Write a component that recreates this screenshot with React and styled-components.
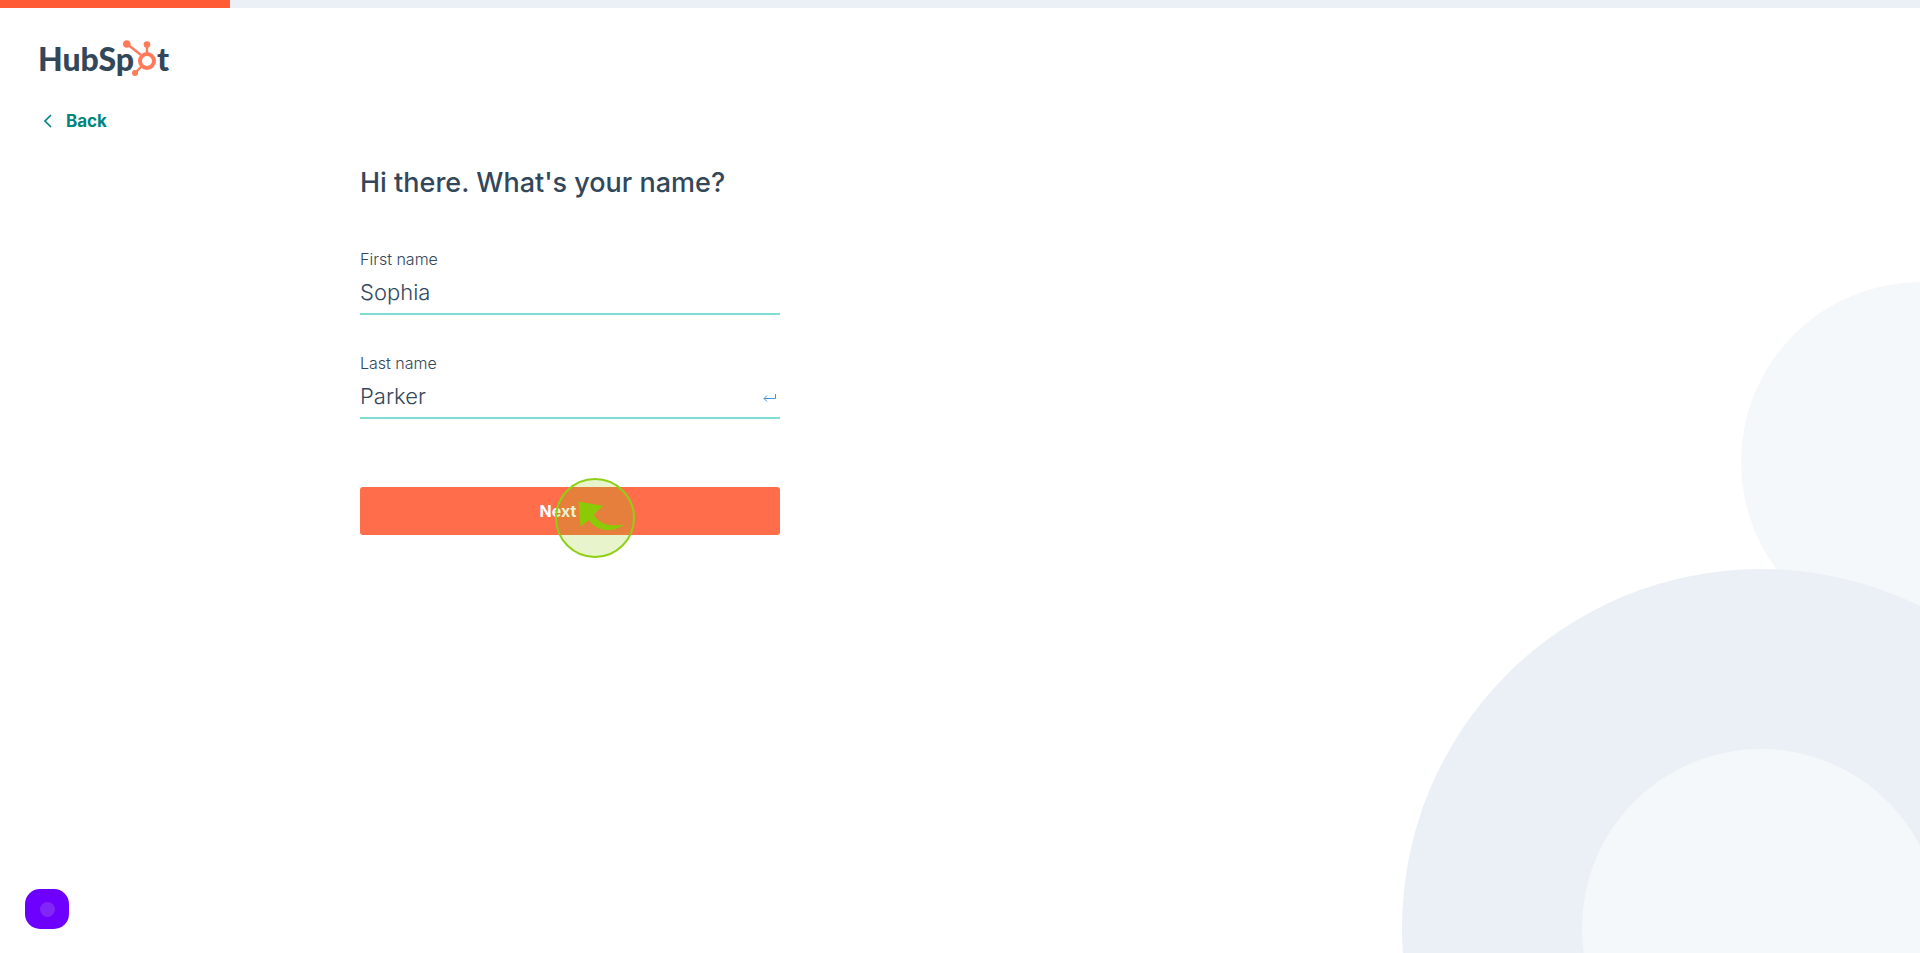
import React, { useState } from "react";
import styled, { createGlobalStyle } from "styled-components";

const GlobalStyle = createGlobalStyle`
  * {
    box-sizing: border-box;
  }

  body {
    margin: 0;
    background-color: #ffffff;
    color: #33475b;
    font-family: Inter, "Noto Sans", sans-serif;
  }
`;

const Page = styled.div`
  position: relative;
  display: flex;
  flex-direction: column;
  min-height: 100vh;
  overflow: hidden;
`;

const ProgressTrack = styled.div`
  height: 8px;
  background-color: #eaf0f6;
`;

const ProgressFill = styled.div`
  height: 100%;
  background-color: #ff5c35;
`;

const Header = styled.header`
  display: flex;
  flex-direction: column;
  align-items: flex-start;
  gap: 31px;
  padding: 32px 38px 0;
`;

const Logo = styled.a`
  display: flex;
  height: 38px;
  color: #33475b;
  font-family: Lato, sans-serif;
  font-size: 32px;
  font-weight: 900;
  line-height: 38px;
  text-decoration: none;
`;

const Sprocket = styled.svg`
  width: 34px;
  height: 38px;
  margin-left: -11px;
`;

const BackLink = styled.a`
  display: flex;
  align-items: center;
  gap: 14px;
  padding-left: 6px;
  color: #00857d;
  font-size: 17px;
  font-weight: 700;
  line-height: 24px;
  text-decoration: none;
`;

const Form = styled.form`
  display: flex;
  flex-direction: column;
  width: 420px;
  margin: 34px 0 0 18.75%;
`;

const Title = styled.h1`
  margin: 0 0 48px;
  font-size: 27px;
  font-weight: 500;
  line-height: 32px;
  white-space: nowrap;
`;

const Field = styled.div`
  display: flex;
  flex-direction: column;
  margin-bottom: 36px;

  label {
    font-size: 16px;
    font-weight: 300;
    line-height: 24px;
  }
`;

const InputRow = styled.div`
  display: flex;
  align-items: center;
  height: 44px;
  padding-right: 4px;
  border-bottom: 2px solid #7fded2;

  input {
    flex: 1;
    min-width: 0;
    padding: 0;
    border: none;
    outline: none;
    background: transparent;
    color: #33475b;
    font-family: inherit;
    font-size: 22px;
    font-weight: 300;
  }
`;

const NextButton = styled.button`
  position: relative;
  display: flex;
  align-items: center;
  justify-content: center;
  gap: 16px;
  height: 48px;
  margin-top: 32px;
  border: none;
  border-radius: 3px;
  background-color: #ff6d4b;
  color: #ffffff;
  font-family: inherit;
  font-size: 16px;
  font-weight: 700;
  cursor: pointer;
`;

const ClickMarker = styled.svg`
  position: absolute;
  top: -9px;
  left: 195px;
  width: 80px;
  height: 80px;
  pointer-events: none;
`;

const Bubbles = styled.svg`
  position: absolute;
  right: 0;
  bottom: 0;
  z-index: -1;
  width: 518px;
  height: 672px;
`;

const ChatButton = styled.button`
  position: absolute;
  bottom: 24px;
  left: 25px;
  display: flex;
  align-items: center;
  justify-content: center;
  width: 44px;
  height: 40px;
  padding: 0;
  border: none;
  border-radius: 15px;
  background-color: #6e00ff;
  cursor: pointer;

  span {
    width: 15px;
    height: 15px;
    border-radius: 50%;
    background-color: #8126f5;
  }
`;

function App() {
  const [firstName, setFirstName] = useState("Sophia");
  const [lastName, setLastName] = useState("Parker");
  const progress = 12;

  return (
    <>
      <GlobalStyle />
      <Page>
        <Bubbles viewBox="0 0 518 672" aria-hidden="true">
          <circle cx="519" cy="181" r="180" fill="#f5f8fa" />
          <circle cx="359" cy="647" r="359" fill="#eaf0f6" />
          <circle cx="359" cy="647" r="179" fill="#f5f8fa" />
        </Bubbles>

        <ProgressTrack>
          <ProgressFill style={{ width: `${progress}%` }} />
        </ProgressTrack>

        <Header>
          <Logo href="#" aria-label="HubSpot">
            <span>HubSp</span>
            <Sprocket viewBox="0 0 34 38" fill="none" stroke="#ff7a59">
              <circle cx="24" cy="21" r="7" strokeWidth="4" />
              <path d="M4 4l14 11M24 5v9M18 27l-6 6" strokeWidth="2.4" />
              <circle cx="3.8" cy="4" r="3.8" fill="#ff7a59" stroke="none" />
              <circle cx="24" cy="4.6" r="3.3" fill="#ff7a59" stroke="none" />
              <circle cx="12" cy="33" r="3" fill="#ff7a59" stroke="none" />
            </Sprocket>
            <span>t</span>
          </Logo>
          <BackLink href="#">
            <svg width="8" height="14" viewBox="0 0 8 14" fill="none" stroke="#00857d" strokeWidth="1.6">
              <path d="M7 1L1 7l6 6" />
            </svg>
            Back
          </BackLink>
        </Header>

        <Form onSubmit={(e) => e.preventDefault()}>
          <Title>Hi there. What's your name?</Title>

          <Field>
            <label htmlFor="firstName">First name</label>
            <InputRow>
              <input
                id="firstName"
                type="text"
                value={firstName}
                onChange={(e) => setFirstName(e.target.value)}
              />
            </InputRow>
          </Field>

          <Field>
            <label htmlFor="lastName">Last name</label>
            <InputRow>
              <input
                id="lastName"
                type="text"
                value={lastName}
                onChange={(e) => setLastName(e.target.value)}
              />
              <svg width="13" height="12" viewBox="0 0 13 12" fill="none" stroke="#4a90e2">
                <path d="M12.5 4v4.5H1M4 5.5l-3 3 3 3" />
              </svg>
            </InputRow>
          </Field>

          <NextButton type="submit">
            Next
            <svg width="8" height="12" viewBox="0 0 8 12" fill="none" stroke="#ffffff" strokeWidth="1.2">
              <path d="M1 3l3 3-3 3" />
            </svg>
            <ClickMarker viewBox="0 0 80 80">
              <circle cx="40" cy="40" r="39" fill="#88c900" fillOpacity="0.2" stroke="#8fd016" strokeWidth="2" />
              <path
                d="M23.5 23.5L48.5 28L41 34L39 37C44 46 55 49 69 46.5C58 55 42 54 34 42L25.5 48.5Z"
                fill="#8acb06"
              />
            </ClickMarker>
          </NextButton>
        </Form>

        <ChatButton type="button" aria-label="Open chat">
          <span />
        </ChatButton>
      </Page>
    </>
  );
}

export default App;
